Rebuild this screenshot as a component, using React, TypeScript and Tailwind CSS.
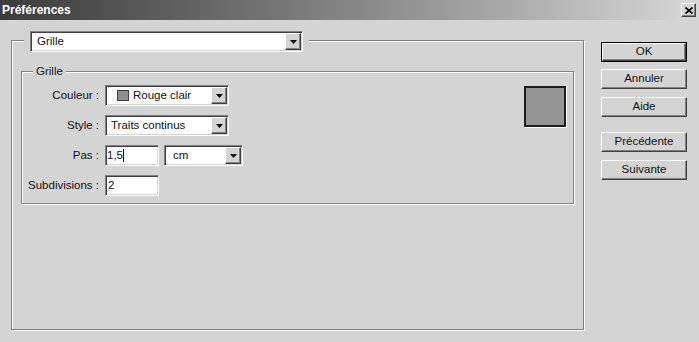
import React from 'react';

const sunken =
  'border border-t-[#808080] border-l-[#808080] border-b-white border-r-white shadow-[inset_1px_1px_0_#404040,inset_-1px_-1px_0_#d4d4d4]';
const raised =
  'border border-t-white border-l-white border-b-[#404040] border-r-[#404040] shadow-[inset_-1px_-1px_0_#808080] bg-[#d4d4d4]';
const etched =
  'border border-[#808080] shadow-[inset_1px_1px_0_#ffffff,1px_1px_0_#ffffff]';

const Arrow = () => (
  <svg width="7" height="4" viewBox="0 0 7 4">
    <polygon points="0,0 7,0 3.5,4" fill="#000" />
  </svg>
);

const DropButton = () => (
  <div className={`w-[16px] h-full flex items-center justify-center shrink-0 ${raised}`}>
    <Arrow />
  </div>
);

const Select: React.FC<{ width: string; children: React.ReactNode }> = ({ width, children }) => (
  <div className={`${width} h-[21px] bg-white flex items-stretch p-px ${sunken}`}>
    <div className="flex-1 flex items-center min-w-0">{children}</div>
    <DropButton />
  </div>
);

const Field: React.FC<{ children: React.ReactNode }> = ({ children }) => (
  <div className={`w-[54px] h-[21px] bg-white flex items-center pl-[1px] ${sunken}`}>{children}</div>
);

const Row: React.FC<{ label: string; children: React.ReactNode; first?: boolean }> = ({ label, children, first }) => (
  <div className={`flex items-center h-[21px] ${first ? '' : 'mt-[9px]'}`}>
    <div className="w-[77px] text-right whitespace-nowrap">{label}</div>
    <div className="ml-[6px] flex items-center">{children}</div>
  </div>
);

const Button: React.FC<{ label: string; className?: string; isDefault?: boolean }> = ({ label, className = '', isDefault }) =>
  isDefault ? (
    <div className={`w-[86px] h-[20px] border border-black ${className}`}>
      <div className={`w-full h-full flex items-center justify-center ${raised}`}>{label}</div>
    </div>
  ) : (
    <div className={`w-[86px] h-[20px] flex items-center justify-center ${raised} ${className}`}>{label}</div>
  );

export default function App() {
  return (
    <div className="w-[699px] h-[342px] bg-[#d4d4d4] overflow-hidden font-['Liberation_Sans',Arial,sans-serif] text-[11.5px] text-[#111] leading-none">
      {/* Title bar */}
      <div className="h-[20px] flex items-center justify-between bg-gradient-to-r from-[#3c3c3c] to-[#d8d8d8]">
        <span className="pl-[2px] font-bold text-white text-[12px]">Préférences</span>
        <div className={`w-[15px] h-[14px] mr-[3px] flex items-center justify-center ${raised}`}>
          <svg width="8" height="7" viewBox="0 0 8 7">
            <path d="M0.5 0.5 L7.5 6.5 M7.5 0.5 L0.5 6.5" stroke="#000" strokeWidth="1.6" />
          </svg>
        </div>
      </div>

      <div className="flex pl-[11px] pt-[20px]">
        {/* Outer group */}
        <div className={`relative w-[573px] h-[290px] ${etched}`}>
          <div className="absolute left-[12px] top-[-10px] px-[6px] bg-[#d4d4d4]">
            <Select width="w-[273px]">
              <span className="pl-[5px]">Grille</span>
            </Select>
          </div>

          {/* Inner group */}
          <div className={`relative ml-[9px] mt-[30px] w-[553px] h-[133px] flex ${etched}`}>
            <div className="absolute left-[11px] top-[-8px] px-[3px] bg-[#d4d4d4] leading-[14px]">Grille</div>

            <div className="pt-[13px]">
              <Row label="Couleur :" first>
                <Select width="w-[124px]">
                  <span className="ml-[10px] w-[12px] h-[11px] bg-[#8f8f8f] border border-[#404040] shrink-0" />
                  <span className="ml-[4px] whitespace-nowrap">Rouge clair</span>
                </Select>
              </Row>
              <Row label="Style :">
                <Select width="w-[124px]">
                  <span className="pl-[4px] whitespace-nowrap">Traits continus</span>
                </Select>
              </Row>
              <Row label="Pas :">
                <Field>
                  <span>1,5</span>
                  <span className="w-px h-[13px] bg-black" />
                </Field>
                <div className="ml-[5px]">
                  <Select width="w-[79px]">
                    <span className="pl-[7px]">cm</span>
                  </Select>
                </div>
              </Row>
              <Row label="Subdivisions :">
                <Field>
                  <span className="pl-[1px]">2</span>
                </Field>
              </Row>
            </div>

            <div className="ml-auto mr-[7px] mt-[14px] w-[42px] h-[41px] bg-[#959595] border-2 border-[#1e1e1e] shadow-[1px_1px_0_#ffffff]" />
          </div>
        </div>

        {/* Buttons */}
        <div className="ml-[17px] pt-[2px] flex flex-col">
          <Button label="OK" isDefault />
          <Button label="Annuler" className="mt-[7px]" />
          <Button label="Aide" className="mt-[8px]" />
          <Button label="Précédente" className="mt-[15px]" />
          <Button label="Suivante" className="mt-[8px]" />
        </div>
      </div>
    </div>
  );
}
